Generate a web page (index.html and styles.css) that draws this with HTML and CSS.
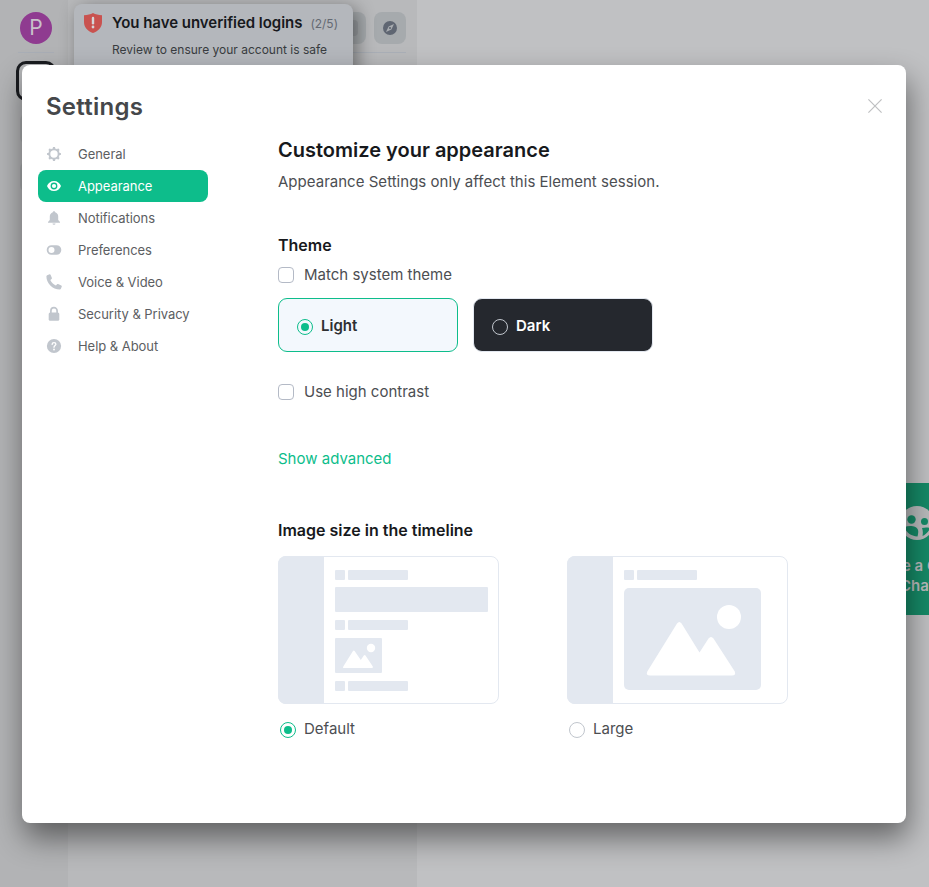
FILE: index.html
```html
<!DOCTYPE html>
<html lang="en">
<head>
<meta charset="utf-8">
<title>Settings</title>
<link rel="stylesheet" href="styles.css">
</head>
<body>
<div class="app">
  <aside class="rail">
    <div class="avatar">P</div>
    <div class="rail-line"></div>
    <div class="space active"></div>
    <div class="space"></div>
    <div class="space"></div>
  </aside>
  <section class="rooms">
    <header class="rooms-head">
      <span class="tool small"><i></i></span>
      <span class="tool"><svg width="14" height="14" viewBox="0 0 14 14"><circle cx="7" cy="7" r="7" fill="#5f6672"/><path d="M11 3 8.4 8.4 3 11 5.6 5.6Z" fill="#a9adb1"/><circle cx="7" cy="7" r="1.1" fill="#5f6672"/></svg></span>
    </header>
  </section>
  <main class="home">
    <div class="tile">
      <svg width="34" height="34" viewBox="0 0 34 34"><circle cx="17" cy="17" r="17" fill="#b9bbbc"/><circle cx="11.5" cy="13.5" r="4.2" fill="#168a67"/><circle cx="24.5" cy="15.5" r="3.5" fill="#168a67"/><path d="M4.5 21C10 19 17 20 18 24c.6 2.400 0 4.500-.5 6.500C11 30 6 26.500 4.500 21ZM22 22c3-.8 6-.6 8 0-1 3.500-4 6.500-7.500 8 .5-3 .5-5.500-.5-8Z" fill="#168a67"/></svg>
      <span>Create a Group<br>Chat</span>
    </div>
  </main>
</div>

<div class="toast">
  <svg width="18" height="20" viewBox="0 0 18 20"><path d="M9 0c2.500 1.500 5.500 2 9 2.200V9c0 5.500-3.500 9-9 11C3.500 18 0 14.500 0 9V2.200C3.500 2 6.500 1.500 9 0Z" fill="#c9524f"/><path d="M9 5v5.200" stroke="#d5d5d8" stroke-width="2.400" stroke-linecap="round"/><circle cx="9" cy="14" r="1.400" fill="#d5d5d8"/></svg>
  <div>
    <div class="toast-title">You have unverified logins<span>(2/5)</span></div>
    <div class="toast-text">Review to ensure your account is safe</div>
  </div>
</div>

<div class="dialog">
  <header class="dialog-head">
    <h1>Settings</h1>
    <svg class="close" width="14" height="14" viewBox="0 0 14 14"><path d="M.4.4 13.600 13.600M13.600.4.4 13.600" stroke="#bfc0c2" stroke-width="1.200"/></svg>
  </header>
  <div class="dialog-body">
    <nav class="tabs">
      <a class="tab"><svg viewBox="0 0 16 16"><circle cx="8" cy="8" r="4.700" fill="none" stroke="currentColor" stroke-width="2"/><path d="M8 1.100v2M8 12.900v2M1.100 8h2M12.900 8h2M3.100 3.100l1.300 1.300M11.600 11.600l1.300 1.300M3.100 12.900l1.300-1.300M11.600 4.400l1.300-1.300" stroke="currentColor" stroke-width="2.200"/></svg>General</a>
      <a class="tab selected"><svg viewBox="0 0 16 16"><path fill-rule="evenodd" d="M8 3c3.200 0 5.900 2 7 5-1.100 3-3.800 5-7 5S2.100 11 1 8c1.100-3 3.800-5 7-5Zm0 1.600a3.400 3.400 0 1 0 0 6.800 3.400 3.400 0 0 0 0-6.800Z"/><circle cx="8" cy="8" r="2.100"/></svg>Appearance</a>
      <a class="tab"><svg viewBox="0 0 16 16"><path d="M8 1.200c.7 0 1.200.5 1.200 1.100C11.200 2.900 12.200 4.600 12.200 6.600v3.500l1.800 1.900v.8H2V12l1.800-1.900V6.600c0-2 1-3.700 3-4.300 0-.6.500-1.100 1.200-1.100ZM6.500 13.500h3a1.500 1.300 0 0 1-3 0Z"/></svg>Notifications</a>
      <a class="tab"><svg viewBox="0 0 16 16"><path fill-rule="evenodd" d="M5.500 3.200h5a4.800 4.800 0 0 1 0 9.600h-5a4.800 4.800 0 0 1 0-9.600Zm0 1.800a3 3 0 1 0 0 6 3 3 0 0 0 0-6Z"/></svg>Preferences</a>
      <a class="tab"><svg viewBox="0 0 16 16"><path d="M1.200 1.200 3.600.2c.4-.1.800.1 1 .5l1.300 3.200c.1.400 0 .7-.3 1L4.300 6c1.100 2.500 3.100 4.500 5.600 5.600l1.200-1.300c.3-.3.600-.4 1-.2l3.200 1.300c.4.200.6.600.5 1l-.9 2.400c-.2.500-.6.800-1.100.8C6.500 15.400.4 9.500.4 2.300c0-.5.300-.9.800-1.100Z"/></svg>Voice &amp; Video</a>
      <a class="tab"><svg viewBox="0 0 16 16"><path d="M4.900 7V4.700a3.100 3.100 0 0 1 6.200 0V7" fill="none" stroke="currentColor" stroke-width="1.700"/><rect x="2.700" y="6.500" width="10.600" height="8.300" rx="1.500"/></svg>Security &amp; Privacy</a>
      <a class="tab"><svg viewBox="0 0 16 16"><circle cx="8" cy="8" r="7.100"/><path d="M6.100 6.400C6.200 5.200 7 4.700 8 4.700c1.100 0 1.900.6 1.900 1.600C9.900 7.500 8 7.700 8 9.300" fill="none" stroke="#fff" stroke-width="1.300" stroke-linecap="round"/><circle cx="8" cy="11.500" r=".9" fill="#fff"/></svg>Help &amp; About</a>
    </nav>
    <section class="content">
      <h2>Customize your appearance</h2>
      <p>Appearance Settings only affect this Element session.</p>
      <h3>Theme</h3>
      <label class="option"><span class="check"></span><span class="label">Match system theme</span></label>
      <div class="themes">
        <label class="theme light"><span class="radio on"></span>Light</label>
        <label class="theme dark"><span class="radio"></span>Dark</label>
      </div>
      <label class="option"><span class="check"></span><span class="label">Use high contrast</span></label>
      <a class="advanced">Show advanced</a>
      <h3 class="size-title">Image size in the timeline</h3>
      <div class="sizes">
        <div>
          <svg class="preview" width="221" height="148" viewBox="0 0 221 148"><rect x=".5" y=".5" width="220" height="147" rx="7.500" fill="#fff" stroke="#e3e8f0"/><g fill="#e3e8f0"><path d="M46 0H8a8 8 0 0 0-8 8v132a8 8 0 0 0 8 8h38Z"/><rect x="57" y="14" width="10" height="10" rx="1"/><rect x="70" y="14" width="60" height="10" rx="1"/><rect x="57" y="31" width="153" height="25" rx="1"/><rect x="57" y="64" width="10" height="10" rx="1"/><rect x="70" y="64" width="60" height="10" rx="1"/><rect x="57" y="82" width="47" height="35" rx="1"/><rect x="57" y="125" width="10" height="10" rx="1"/><rect x="70" y="125" width="60" height="10" rx="1"/></g><path d="M65.300 110.500 75 95q.7-1 1.600 0L82.800 104l3-4.500q.9-1 1.700 0L94.800 110.500q.3 1.500-.7 1.500H65.500Q64.600 112 65.300 110.500Z" fill="#fff"/><circle cx="93" cy="92" r="4.200" fill="#fff"/></svg>
          <label class="option size"><span class="radio on"></span><span class="label">Default</span></label>
        </div>
        <div>
          <svg class="preview" width="221" height="148" viewBox="0 0 221 148"><rect x=".5" y=".5" width="220" height="147" rx="7.500" fill="#fff" stroke="#e3e8f0"/><g fill="#e3e8f0"><path d="M46 0H8a8 8 0 0 0-8 8v132a8 8 0 0 0 8 8h38Z"/><rect x="57" y="14" width="10" height="10" rx="1"/><rect x="70" y="14" width="60" height="10" rx="1"/><rect x="57" y="32" width="137" height="102" rx="5"/></g><path d="M80.300 115.500 110 67.500q2.300-3 4.600 0L132.500 96.500l9-14q2.500-3 5 0l21.300 33q1.500 4-2.800 4H83q-4.500 0-2.700-4Z" fill="#fff"/><circle cx="162" cy="61" r="12" fill="#fff"/></svg>
          <label class="option size"><span class="radio"></span><span class="label">Large</span></label>
        </div>
      </div>
    </section>
  </div>
</div>
</body>
</html>
```
FILE: styles.css
```css
* { box-sizing: border-box; }
body {
  margin: 0;
  width: 929px;
  height: 887px;
  overflow: hidden;
  position: relative;
  font-family: Inter, "Liberation Sans", sans-serif;
  font-size: 15px;
  color: #4c4e52;
}
h1, h2, h3, p { margin: 0; }
svg { display: block; flex: none; }

.app { display: flex; height: 887px; }
.rail {
  width: 68px;
  flex: none;
  background: #b2b3b5;
  display: flex;
  flex-direction: column;
  align-items: center;
  padding: 12px 0 0 4px;
}
.avatar {
  width: 32px;
  height: 32px;
  border-radius: 50%;
  background: #8f3b90;
  color: #c8c1ca;
  font-size: 21px;
  line-height: 32px;
  text-align: center;
}
.rail-line { width: 36px; height: 1px; background: #a9aeb6; margin: 8px 0; }
.space { width: 32px; height: 32px; border-radius: 8px; background: #a6a8aa; margin-top: 16px; flex: none; }
.space.active {
  width: 40px;
  height: 40px;
  margin: 0 0 -4px;
  border: 3px solid #1a1c20;
  border-radius: 10px;
  background: #b5b6b8;
}
.rooms { width: 349px; flex: none; background: #b8b9bb; padding: 0 11px; }
.rooms-head {
  height: 53px;
  border-bottom: 1px solid #aab0b8;
  display: flex;
  justify-content: flex-end;
  align-items: flex-start;
  padding-top: 12px;
  gap: 8px;
}
.tool {
  width: 32px;
  height: 32px;
  border-radius: 8px;
  background: #a6aaad;
  display: flex;
  align-items: center;
  justify-content: center;
}
.tool i { width: 16px; height: 16px; border-radius: 4px; background: #999da1; }
.home { flex: 1; min-width: 0; background: #c0c1c3; padding: 483px 0 0 420px; overflow: hidden; }
.tile {
  width: 160px;
  height: 132px;
  background: #168a67;
  color: #b9bbbc;
  display: flex;
  flex-direction: column;
  align-items: center;
  padding-top: 23px;
  gap: 16px;
  font-weight: 600;
  line-height: 20px;
  text-align: center;
}

.toast {
  position: absolute;
  left: 74px;
  top: 4px;
  width: 279px;
  height: 80px;
  display: flex;
  gap: 10px;
  padding: 9px 10px;
  border-radius: 8px;
  background: #b4b7bc;
  box-shadow: 4px 4px 18px rgba(0, 0, 0, .42);
}
.toast-title { font-size: 15px; height: 20px; line-height: 20px; font-weight: 600; color: #17191c; white-space: nowrap; letter-spacing: -.03px; }
.toast-title span { font-size: 12px; line-height: 1; font-weight: 400; color: #646972; margin-left: 8px; }
.toast-text { font-size: 12px; line-height: 16px; margin-top: 9px; color: #393c40; white-space: nowrap; }

.dialog {
  position: absolute;
  left: 22px;
  top: 65px;
  width: 884px;
  height: 758px;
  padding: 24px 24px 24px 16px;
  border-radius: 8px;
  background: #fff;
  box-shadow: 2px 15px 30px rgba(0, 0, 0, .48);
}
.dialog-head { display: flex; justify-content: space-between; height: 36px; padding-left: 8px; }
.dialog-head h1 { font-size: 24px; line-height: 36px; font-weight: 600; letter-spacing: .25px; color: #45474a; }
.close { margin-top: 10px; }
.dialog-body { display: flex; gap: 70px; }
.tabs { width: 170px; padding-top: 13px; flex: none; }
.tab {
  height: 32px;
  display: flex;
  align-items: center;
  gap: 16px;
  padding-left: 8px;
  border-radius: 8px;
  font-size: 13px;
  letter-spacing: -.04px;
  color: #5c5e62;
  white-space: nowrap;
}
.tab svg { width: 16px; height: 16px; fill: currentColor; color: #c1c6cd; }
.tab.selected { background: #0dbd8b; color: #fff; }
.tab.selected svg { color: #fff; }

.content { flex: 1; padding-top: 10px; }
h2 { font-size: 20px; line-height: 30px; font-weight: 600; color: #17191c; }
.content p { line-height: 24px; margin-top: 5px; letter-spacing: .02px; }
h3 { font-size: 16px; line-height: 24px; font-weight: 600; color: #17191c; margin-top: 39px; }
.option { display: flex; align-items: center; height: 24px; }
.label { line-height: 23px; align-self: flex-start; }
h3 + .option { margin-top: 6px; }
.check { width: 16px; height: 16px; border: 1px solid #b4bac6; border-radius: 4px; margin-right: 10px; }
.radio {
  width: 16px;
  height: 16px;
  border: 1px solid #c1c6cd;
  border-radius: 50%;
  margin-right: 8px;
  display: flex;
  align-items: center;
  justify-content: center;
  position: relative;
  top: 1px;
}
.radio.on { border-color: #0dbd8b; }
.radio.on::after { content: ""; width: 8px; height: 8px; border-radius: 50%; background: #0dbd8b; }
.themes { display: flex; gap: 15px; margin: 11px 0 28px; }
.theme {
  width: 180px;
  height: 54px;
  border: 1px solid #e3e8f0;
  border-radius: 9px;
  display: flex;
  align-items: center;
  padding-left: 18px;
  font-weight: 600;
}
.theme .radio { top: 1.500px; }
.light { background: #f3f8fd; border-color: #0dbd8b; color: #2e2f32; }
.dark { background: #25282e; color: #fff; }
.advanced { display: block; margin-top: 43px; line-height: 24px; color: #0dbd8b; }
.size-title { margin-top: 47px; }
.sizes { display: flex; gap: 68px; margin-top: 14px; }
.size { margin-top: 13px; padding-left: 2px; }
```
